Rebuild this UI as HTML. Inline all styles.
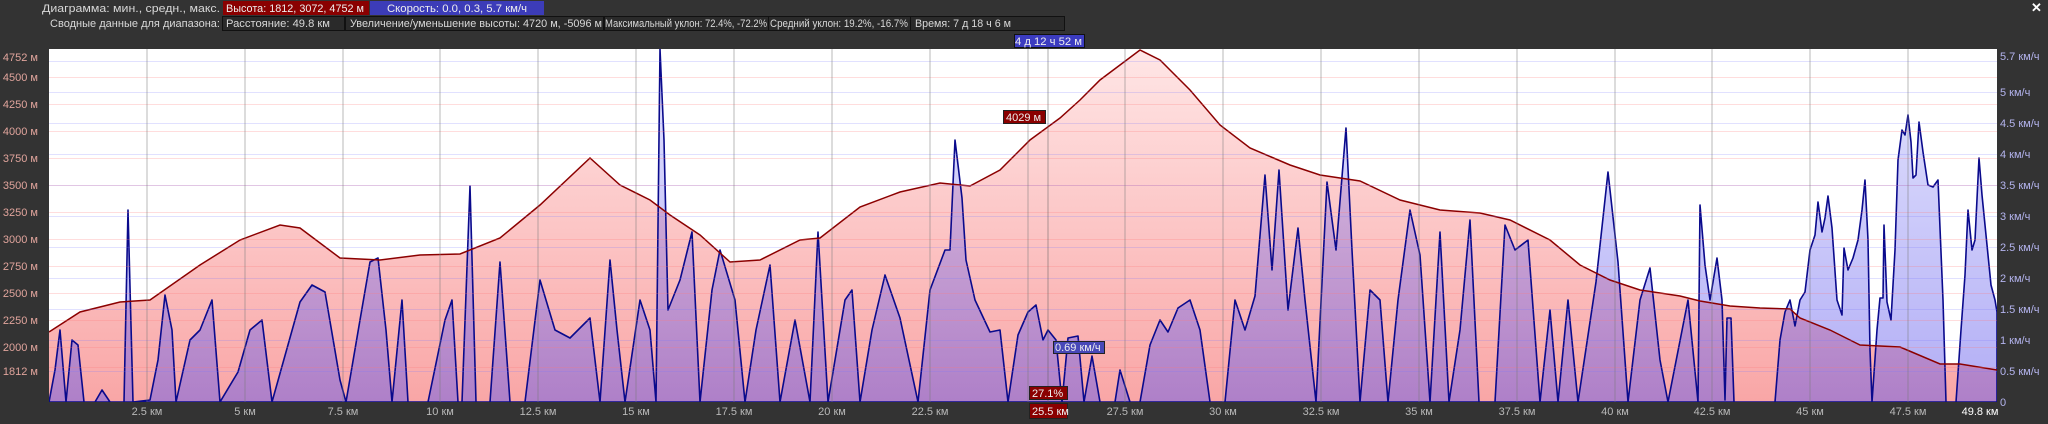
<!DOCTYPE html>
<html><head><meta charset="utf-8"><style>
html,body{margin:0;padding:0;background:#333;}
body{width:2048px;height:419px;overflow:hidden;font-family:"Liberation Sans",sans-serif;}
svg text{font-family:"Liberation Sans",sans-serif;font-size:11px;}
</style></head><body>
<svg width="2048" height="419" viewBox="0 0 2048 419" xmlns="http://www.w3.org/2000/svg">
<defs>
<linearGradient id="pkg" x1="0" y1="49" x2="0" y2="402" gradientUnits="userSpaceOnUse"><stop offset="0" stop-color="#ffe6e6"/><stop offset="1" stop-color="#f9a6a6"/></linearGradient>
<linearGradient id="bl" x1="0" y1="49" x2="0" y2="402" gradientUnits="userSpaceOnUse"><stop offset="0" stop-color="rgb(120,120,245)" stop-opacity="0.22"/><stop offset="1" stop-color="rgb(100,90,235)" stop-opacity="0.5"/></linearGradient>
<clipPath id="pc"><rect x="49" y="49" width="1948" height="353"/></clipPath>
</defs>
<rect x="0" y="0" width="2048" height="419" fill="#333"/>
<!-- header -->
<text x="42" y="12" fill="#d8d8d8" textLength="178" lengthAdjust="spacingAndGlyphs">Диаграмма: мин., средн., макс.</text>
<rect x="223" y="1" width="146" height="14" fill="#8a0000"/>
<text x="226" y="12" fill="#eee" textLength="138" lengthAdjust="spacingAndGlyphs">Высота: 1812, 3072, 4752 м</text>
<rect x="370" y="1" width="174" height="14" fill="#3c3cb8"/>
<text x="387" y="12" fill="#eee" textLength="140" lengthAdjust="spacingAndGlyphs">Скорость: 0.0, 0.3, 5.7 км/ч</text>
<text x="50" y="27" fill="#d8d8d8" textLength="170" lengthAdjust="spacingAndGlyphs">Сводные данные для диапазона:</text>
<g fill="#2a2a2a" stroke="#111">
<rect x="222.5" y="16.5" width="122" height="14"/>
<rect x="345.5" y="16.5" width="258" height="14"/>
<rect x="604.5" y="16.5" width="164" height="14"/>
<rect x="768.5" y="16.5" width="142" height="14"/>
<rect x="910.5" y="16.5" width="154" height="14"/>
</g>
<g fill="#d8d8d8">
<text x="226" y="27" textLength="104" lengthAdjust="spacingAndGlyphs">Расстояние: 49.8 км</text>
<text x="350" y="27" textLength="252" lengthAdjust="spacingAndGlyphs">Увеличение/уменьшение высоты: 4720 м, -5096 м</text>
<text x="605" y="27" textLength="162" lengthAdjust="spacingAndGlyphs">Максимальный уклон: 72.4%, -72.2%</text>
<text x="770" y="27" textLength="138" lengthAdjust="spacingAndGlyphs">Средний уклон: 19.2%, -16.7%</text>
<text x="915" y="27" textLength="96" lengthAdjust="spacingAndGlyphs">Время: 7 д 18 ч 6 м</text>
</g>
<rect x="1014.5" y="34.5" width="70" height="13" fill="#3c3cc0" stroke="#111"/>
<text x="1015" y="45" fill="#eee" textLength="67" lengthAdjust="spacingAndGlyphs">4 д 12 ч 52 м</text>
<text x="2031" y="12" fill="#fff" font-weight="bold" style="font-size:13px">✕</text>
<!-- plot -->
<rect x="49" y="49" width="1948" height="353" fill="#fff"/>
<g clip-path="url(#pc)">
<path fill="url(#pkg)" d="M49,332 L80,312 L120,302 L150,300 L200,265 L240,240 L280,225 L300,228 L340,258 L380,260 L420,255 L460,254 L500,238 L540,205 L590,158 L620,185 L650,200 L670,215 L700,235 L730,262 L760,260 L800,240 L820,238 L860,207 L900,192 L940,183 L970,186 L1000,170 L1030,140 L1060,118 L1080,100 L1100,80 L1140,50 L1160,60 L1190,90 L1220,125 L1250,148 L1290,165 L1320,175 L1360,181 L1400,200 L1440,210 L1480,213 L1510,220 L1550,240 L1580,265 L1610,280 L1640,290 L1680,296 L1700,301 L1730,306 L1760,308 L1790,309 L1800,318 L1830,330 L1860,345 L1900,347 L1940,364 L1960,364 L1997,370 L1997,402 L49,402Z"/>
<path fill="url(#bl)" stroke="#0a0a8c" stroke-width="1.6" stroke-linejoin="round" d="M49,402 L55,370 L60,330 L66,402 L72,340 L78,345 L84,402 L95,402 L102,390 L110,402 L124,402 L128,210 L133,402 L150,400 L158,360 L165,295 L172,330 L176,402 L190,340 L200,330 L212,300 L220,402 L238,372 L250,330 L262,320 L272,402 L300,302 L312,285 L325,292 L340,380 L346,402 L360,320 L370,262 L378,258 L386,330 L392,402 L402,300 L408,402 L428,402 L445,320 L452,300 L458,402 L462,402 L470,186 L476,402 L490,402 L500,262 L510,402 L525,402 L540,280 L555,330 L570,338 L590,318 L600,402 L610,260 L617,330 L625,402 L640,300 L650,330 L656,402 L660,49 L664,140 L668,310 L680,280 L692,232 L700,402 L712,290 L720,250 L735,300 L745,402 L756,330 L770,265 L780,402 L795,320 L810,402 L818,232 L828,402 L845,300 L852,290 L860,402 L872,330 L885,275 L900,318 L918,402 L930,290 L945,250 L950,250 L955,140 L962,198 L966,260 L975,300 L990,332 L1000,330 L1008,402 L1018,335 L1028,312 L1036,305 L1043,340 L1048,330 L1056,340 L1062,402 L1068,338 L1078,336 L1084,402 L1092,356 L1100,402 L1115,402 L1120,370 L1130,402 L1140,402 L1150,345 L1160,320 L1168,332 L1178,308 L1190,300 L1200,330 L1210,402 L1225,402 L1235,300 L1245,330 L1255,296 L1265,175 L1272,270 L1279,170 L1288,310 L1298,228 L1305,300 L1316,402 L1327,182 L1336,250 L1346,128 L1352,250 L1360,402 L1370,290 L1380,300 L1388,402 L1398,300 L1410,210 L1420,255 L1430,402 L1440,232 L1449,402 L1460,330 L1470,220 L1479,402 L1495,402 L1505,225 L1515,250 L1528,240 L1540,402 L1550,310 L1558,402 L1568,300 L1578,402 L1596,282 L1608,172 L1618,262 L1628,402 L1640,300 L1650,268 L1660,360 L1668,402 L1688,300 L1698,402 L1700,205 L1705,265 L1710,300 L1717,258 L1722,300 L1725,400 L1727,318 L1731,318 L1734,402 L1775,402 L1780,340 L1785,312 L1790,300 L1795,326 L1800,300 L1805,292 L1810,250 L1815,235 L1818,202 L1822,232 L1825,218 L1828,196 L1832,228 L1837,300 L1842,315 L1844,248 L1848,270 L1853,258 L1858,240 L1862,210 L1865,180 L1868,240 L1870,350 L1872,402 L1877,330 L1880,298 L1883,298 L1884,225 L1887,302 L1891,320 L1895,250 L1898,160 L1902,130 L1905,135 L1908,115 L1911,142 L1913,178 L1916,175 L1919,122 L1923,152 L1928,185 L1933,187 L1938,180 L1943,300 L1946,402 L1956,402 L1961,330 L1965,275 L1968,210 L1972,250 L1975,240 L1979,158 L1982,195 L1986,235 L1991,285 L1995,300 L1997,312 L1997,402Z"/>
<path fill="none" stroke="#8b0000" stroke-width="1.5" d="M49,332 L80,312 L120,302 L150,300 L200,265 L240,240 L280,225 L300,228 L340,258 L380,260 L420,255 L460,254 L500,238 L540,205 L590,158 L620,185 L650,200 L670,215 L700,235 L730,262 L760,260 L800,240 L820,238 L860,207 L900,192 L940,183 L970,186 L1000,170 L1030,140 L1060,118 L1080,100 L1100,80 L1140,50 L1160,60 L1190,90 L1220,125 L1250,148 L1290,165 L1320,175 L1360,181 L1400,200 L1440,210 L1480,213 L1510,220 L1550,240 L1580,265 L1610,280 L1640,290 L1680,296 L1700,301 L1730,306 L1760,308 L1790,309 L1800,318 L1830,330 L1860,345 L1900,347 L1940,364 L1960,364 L1997,370"/>
<g stroke="rgba(255,120,120,0.25)" stroke-width="1">
<path d="M49,77.5H1997M49,104.5H1997M49,131.5H1997M49,158.5H1997M49,185.5H1997M49,212.5H1997M49,239.5H1997M49,266.5H1997M49,293.5H1997M49,320.5H1997M49,347.5H1997M49,367.5H1997"/>
</g>
<g stroke="rgba(120,120,255,0.22)" stroke-width="1">
<path d="M49,61.5H1997M49,92.5H1997M49,123.5H1997M49,154.5H1997M49,185.5H1997M49,216.5H1997M49,247.5H1997M49,278.5H1997M49,309.5H1997M49,340.5H1997M49,371.5H1997"/>
</g>
<g stroke="rgba(120,120,120,0.35)" stroke-width="1.5">
<path d="M147,49V402M245,49V402M343,49V402M440,49V402M538,49V402M636,49V402M734,49V402M832,49V402M930,49V402M1028,49V402M1125,49V402M1223,49V402M1321,49V402M1419,49V402M1517,49V402M1615,49V402M1712,49V402M1810,49V402M1908,49V402"/>
</g>
<path d="M1048,49V402" stroke="rgba(90,90,90,0.5)" stroke-width="1"/>
</g>
<g fill="#e0a49c" text-anchor="end">
<text x="38" y="61">4752 м</text><text x="38" y="81">4500 м</text><text x="38" y="108">4250 м</text><text x="38" y="135">4000 м</text><text x="38" y="162">3750 м</text><text x="38" y="189">3500 м</text><text x="38" y="216">3250 м</text><text x="38" y="243">3000 м</text><text x="38" y="270">2750 м</text><text x="38" y="297">2500 м</text><text x="38" y="324">2250 м</text><text x="38" y="351">2000 м</text><text x="38" y="375">1812 м</text>
</g>
<g fill="#b4b4ee">
<text x="2000" y="60">5.7 км/ч</text><text x="2000" y="96">5 км/ч</text><text x="2000" y="127">4.5 км/ч</text><text x="2000" y="158">4 км/ч</text><text x="2000" y="189">3.5 км/ч</text><text x="2000" y="220">3 км/ч</text><text x="2000" y="251">2.5 км/ч</text><text x="2000" y="282">2 км/ч</text><text x="2000" y="313">1.5 км/ч</text><text x="2000" y="344">1 км/ч</text><text x="2000" y="375">0.5 км/ч</text><text x="2000" y="406">0</text>
</g>
<g fill="#b8b8b8" text-anchor="middle">
<text x="147" y="415">2.5 км</text><text x="245" y="415">5 км</text><text x="343" y="415">7.5 км</text><text x="440" y="415">10 км</text><text x="538" y="415">12.5 км</text><text x="636" y="415">15 км</text><text x="734" y="415">17.5 км</text><text x="832" y="415">20 км</text><text x="930" y="415">22.5 км</text><text x="1125" y="415">27.5 км</text><text x="1223" y="415">30 км</text><text x="1321" y="415">32.5 км</text><text x="1419" y="415">35 км</text><text x="1517" y="415">37.5 км</text><text x="1615" y="415">40 км</text><text x="1712" y="415">42.5 км</text><text x="1810" y="415">45 км</text><text x="1908" y="415">47.5 км</text>
</g>
<text x="1980" y="415" fill="#fff" text-anchor="middle">49.8 км</text>
<rect x="1003.5" y="110.5" width="42" height="13" fill="#8a0000" stroke="#222"/>
<text x="1006" y="121" fill="#eee">4029 м</text>
<rect x="1053.5" y="341.5" width="51" height="12" fill="#4848b8" stroke="#222"/>
<text x="1055" y="351" fill="#eee">0.69 км/ч</text>
<rect x="1029.5" y="386.5" width="38" height="13" fill="#8a0000" stroke="#222"/>
<text x="1032" y="397" fill="#eee">27.1%</text>
<rect x="1029.5" y="403.5" width="38" height="15" fill="#8a0000" stroke="#222"/>
<text x="1032" y="415" fill="#eee">25.5 км</text>
</svg>
</body></html>
